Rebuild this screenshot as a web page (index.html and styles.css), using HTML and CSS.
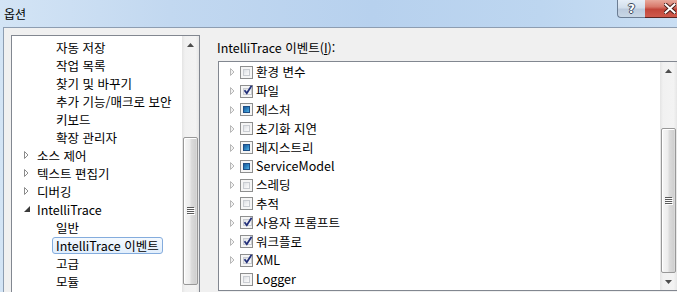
FILE: index.html
```html
<!DOCTYPE html>
<html lang="ko">
<head>
<meta charset="utf-8">
<title>옵션</title>
<link rel="stylesheet" href="styles.css">
</head>
<body>
<div class="window">
  <div class="titlebar">
    <span class="title">옵션</span>
    <div class="caption-buttons">
      <div class="cap-btn help"><span class="help-glyph">?</span></div>
      <div class="cap-btn close">
        <svg width="12" height="11" viewBox="0 0 12 11"><path d="M1.5 1.5 L10.5 9.5 M10.5 1.5 L1.5 9.5" stroke="#4a1d19" stroke-width="4" stroke-linecap="square"/><path d="M1.5 1.5 L10.5 9.5 M10.5 1.5 L1.5 9.5" stroke="#ffffff" stroke-width="2" stroke-linecap="square"/></svg>
      </div>
    </div>
  </div>
  <div class="client">
    <div class="tree-panel">
      <ul class="tree">
        <li class="node l2"><span class="lbl">자동 저장</span></li>
        <li class="node l2"><span class="lbl">작업 목록</span></li>
        <li class="node l2"><span class="lbl">찾기 및 바꾸기</span></li>
        <li class="node l2"><span class="lbl">추가 기능/매크로 보안</span></li>
        <li class="node l2"><span class="lbl">키보드</span></li>
        <li class="node l2"><span class="lbl">확장 관리자</span></li>
        <li class="node l1"><span class="exp"><svg width="5" height="8" viewBox="0 0 5 8"><path d="M0.5 0.5 L4 4 L0.5 7.5 Z" fill="#fff" stroke="#8c8c8c"/></svg></span><span class="lbl">소스 제어</span></li>
        <li class="node l1"><span class="exp"><svg width="5" height="8" viewBox="0 0 5 8"><path d="M0.5 0.5 L4 4 L0.5 7.5 Z" fill="#fff" stroke="#8c8c8c"/></svg></span><span class="lbl">텍스트 편집기</span></li>
        <li class="node l1"><span class="exp"><svg width="5" height="8" viewBox="0 0 5 8"><path d="M0.5 0.5 L4 4 L0.5 7.5 Z" fill="#fff" stroke="#8c8c8c"/></svg></span><span class="lbl">디버깅</span></li>
        <li class="node l1"><span class="exp"><svg width="6" height="6" viewBox="0 0 6 6"><path d="M6 0 L6 6 L0 6 Z" fill="#3a3a3a"/></svg></span><span class="lbl">IntelliTrace</span></li>
        <li class="node l2"><span class="lbl">일반</span></li>
        <li class="node l2"><span class="lbl sel">IntelliTrace 이벤트</span></li>
        <li class="node l2"><span class="lbl">고급</span></li>
        <li class="node l2"><span class="lbl">모듈</span></li>
      </ul>
      <div class="vscroll tree-sb">
        <div class="sb-btn"><svg width="7" height="4" viewBox="0 0 7 4"><path d="M0 4 L3.5 0 L7 4 Z" fill="#4d4d4d"/></svg></div>
        <div class="sb-gap tree-gap"></div>
        <div class="thumb tree-thumb">
          <svg width="8" height="8" viewBox="0 0 8 8"><g fill="#5a5a5a"><rect x="0" y="0" width="7" height="1"/><rect x="0" y="2" width="7" height="1"/><rect x="0" y="4" width="7" height="1"/><rect x="0" y="6" width="7" height="1"/></g><g fill="#ffffff"><rect x="1" y="1" width="7" height="1"/><rect x="1" y="3" width="7" height="1"/><rect x="1" y="5" width="7" height="1"/><rect x="1" y="7" width="7" height="1"/></g></svg>
        </div>
        <div class="sb-gap"></div>
      </div>
    </div>
    <div class="right">
      <div class="field-label">IntelliTrace 이벤트(<span class="acc">I</span>):</div>
      <div class="listbox">
        <ul class="events">
          <li class="ev"><span class="exp2"><svg width="5" height="8" viewBox="0 0 5 8"><path d="M0.5 0.5 L4 4 L0.5 7.5 Z" fill="#f2f2f2" stroke="#b8b8b8"/></svg></span><span class="cb"><span class="cb-in"></span></span><span class="ev-txt">환경 변수</span></li>
          <li class="ev"><span class="exp2"><svg width="5" height="8" viewBox="0 0 5 8"><path d="M0.5 0.5 L4 4 L0.5 7.5 Z" fill="#f2f2f2" stroke="#b8b8b8"/></svg></span><span class="cb"><span class="cb-in"><svg class="chk" width="10" height="10" viewBox="0 0 10 10"><path d="M1.5 5.2 L3.8 8.2 L8.6 0.8" fill="none" stroke="#23307a" stroke-width="1.8"/></svg></span></span><span class="ev-txt">파일</span></li>
          <li class="ev"><span class="exp2"><svg width="5" height="8" viewBox="0 0 5 8"><path d="M0.5 0.5 L4 4 L0.5 7.5 Z" fill="#f2f2f2" stroke="#b8b8b8"/></svg></span><span class="cb mixed"><span class="cb-in"></span></span><span class="ev-txt">제스처</span></li>
          <li class="ev"><span class="exp2"><svg width="5" height="8" viewBox="0 0 5 8"><path d="M0.5 0.5 L4 4 L0.5 7.5 Z" fill="#f2f2f2" stroke="#b8b8b8"/></svg></span><span class="cb"><span class="cb-in"></span></span><span class="ev-txt">초기화 지연</span></li>
          <li class="ev"><span class="exp2"><svg width="5" height="8" viewBox="0 0 5 8"><path d="M0.5 0.5 L4 4 L0.5 7.5 Z" fill="#f2f2f2" stroke="#b8b8b8"/></svg></span><span class="cb mixed"><span class="cb-in"></span></span><span class="ev-txt">레지스트리</span></li>
          <li class="ev"><span class="exp2"><svg width="5" height="8" viewBox="0 0 5 8"><path d="M0.5 0.5 L4 4 L0.5 7.5 Z" fill="#f2f2f2" stroke="#b8b8b8"/></svg></span><span class="cb mixed"><span class="cb-in"></span></span><span class="ev-txt">ServiceModel</span></li>
          <li class="ev"><span class="exp2"><svg width="5" height="8" viewBox="0 0 5 8"><path d="M0.5 0.5 L4 4 L0.5 7.5 Z" fill="#f2f2f2" stroke="#b8b8b8"/></svg></span><span class="cb"><span class="cb-in"></span></span><span class="ev-txt">스레딩</span></li>
          <li class="ev"><span class="exp2"><svg width="5" height="8" viewBox="0 0 5 8"><path d="M0.5 0.5 L4 4 L0.5 7.5 Z" fill="#f2f2f2" stroke="#b8b8b8"/></svg></span><span class="cb"><span class="cb-in"></span></span><span class="ev-txt">추적</span></li>
          <li class="ev"><span class="exp2"><svg width="5" height="8" viewBox="0 0 5 8"><path d="M0.5 0.5 L4 4 L0.5 7.5 Z" fill="#f2f2f2" stroke="#b8b8b8"/></svg></span><span class="cb"><span class="cb-in"><svg class="chk" width="10" height="10" viewBox="0 0 10 10"><path d="M1.5 5.2 L3.8 8.2 L8.6 0.8" fill="none" stroke="#23307a" stroke-width="1.8"/></svg></span></span><span class="ev-txt">사용자 프롬프트</span></li>
          <li class="ev"><span class="exp2"><svg width="5" height="8" viewBox="0 0 5 8"><path d="M0.5 0.5 L4 4 L0.5 7.5 Z" fill="#f2f2f2" stroke="#b8b8b8"/></svg></span><span class="cb"><span class="cb-in"><svg class="chk" width="10" height="10" viewBox="0 0 10 10"><path d="M1.5 5.2 L3.8 8.2 L8.6 0.8" fill="none" stroke="#23307a" stroke-width="1.8"/></svg></span></span><span class="ev-txt">워크플로</span></li>
          <li class="ev"><span class="exp2"><svg width="5" height="8" viewBox="0 0 5 8"><path d="M0.5 0.5 L4 4 L0.5 7.5 Z" fill="#f2f2f2" stroke="#b8b8b8"/></svg></span><span class="cb"><span class="cb-in"><svg class="chk" width="10" height="10" viewBox="0 0 10 10"><path d="M1.5 5.2 L3.8 8.2 L8.6 0.8" fill="none" stroke="#23307a" stroke-width="1.8"/></svg></span></span><span class="ev-txt">XML</span></li>
          <li class="ev"><span class="exp2"></span><span class="cb"><span class="cb-in"></span></span><span class="ev-txt">Logger</span></li>
        </ul>
        <div class="vscroll list-sb">
          <div class="sb-btn"><svg width="7" height="4" viewBox="0 0 7 4"><path d="M0 4 L3.5 0 L7 4 Z" fill="#4d4d4d"/></svg></div>
          <div class="sb-gap list-gap"></div>
          <div class="thumb list-thumb">
            <svg width="8" height="8" viewBox="0 0 8 8"><g fill="#5a5a5a"><rect x="0" y="0" width="7" height="1"/><rect x="0" y="2" width="7" height="1"/><rect x="0" y="4" width="7" height="1"/><rect x="0" y="6" width="7" height="1"/></g><g fill="#ffffff"><rect x="1" y="1" width="7" height="1"/><rect x="1" y="3" width="7" height="1"/><rect x="1" y="5" width="7" height="1"/><rect x="1" y="7" width="7" height="1"/></g></svg>
          </div>
          <div class="sb-btn"><svg width="7" height="4" viewBox="0 0 7 4"><path d="M0 0 L3.5 4 L7 0 Z" fill="#4d4d4d"/></svg></div>
        </div>
      </div>
    </div>
  </div>
</div>
</body>
</html>
```

FILE: styles.css
```css
* { box-sizing: border-box; }

html, body {
  margin: 0;
  padding: 0;
}

body {
  width: 677px;
  height: 292px;
  overflow: hidden;
  font-family: "Noto Sans CJK KR", "Noto Sans", sans-serif;
  font-size: 12.5px;
  color: #000;
}

.window {
  width: 677px;
  height: 292px;
  display: flex;
  flex-direction: column;
  background: linear-gradient(to right, #d3e4f5 0%, #c2d8f0 25%, #b7d1ee 55%, #bdd6f0 80%, #c9def3 100%);
}

.titlebar {
  height: 27px;
  flex: none;
  display: flex;
  align-items: flex-start;
}

.title {
  margin: 6px 0 0 4px;
  font-size: 12px;
  line-height: 15px;
  color: #000;
}

.caption-buttons {
  margin-left: auto;
  display: flex;
}

.cap-btn {
  height: 18px;
  display: flex;
  align-items: center;
  justify-content: center;
}

.help {
  width: 28px;
  border: 1px solid #6b7d93;
  border-top: none;
  border-right: none;
  border-radius: 0 0 0 4px;
  background: linear-gradient(to bottom, #e6eef7 0%, #d3dfec 45%, #bccbdd 55%, #c9d7e6 100%);
}

.help-glyph {
  font-family: "DejaVu Sans", sans-serif;
  font-weight: bold;
  font-size: 12px;
  line-height: 12px;
  color: #fff;
  text-shadow: 1px 0 0 #3b4a5e, -1px 0 0 #3b4a5e, 0 1px 0 #3b4a5e, 0 -1px 0 #3b4a5e;
}

.close {
  width: 32px;
  justify-content: flex-end;
  padding-right: 1px;
  border-bottom: 1px solid #5a2420;
  background: linear-gradient(to bottom, #e8a89b 0%, #d8786a 40%, #c2463a 55%, #cf5a4c 100%);
}

.client {
  flex: 1;
  margin-left: 3px;
  border-left: 1px solid #8d9db1;
  border-top: 1px solid #8d9db1;
  background: #f0f0f0;
  display: flex;
  align-items: flex-start;
  min-height: 0;
  overflow: hidden;
}

/* ---------- left tree ---------- */

.tree-panel {
  margin: 7px 0 0 7px;
  width: 189px;
  height: 258px;
  flex: none;
  border: 1px solid #828790;
  border-bottom: none;
  background: #fff;
  display: flex;
}

.tree {
  list-style: none;
  margin: 0;
  padding: 2px 0 0 0;
  flex: 1;
  min-width: 0;
}

.node {
  height: 18px;
  display: flex;
  align-items: center;
  white-space: nowrap;
  line-height: 16px;
}

.node.l1 {
  padding-left: 7px;
}

.node.l2 {
  padding-left: 40px;
}

.exp {
  width: 15px;
  height: 16px;
  display: flex;
  align-items: center;
  justify-content: center;
  margin-right: 3px;
}

.lbl {
  display: inline-block;
  border: 1px solid transparent;
  padding: 0 3px;
  line-height: 15px;
}

.node.l1 .lbl {
  padding-left: 0;
  margin-left: -1px;
}

.lbl.sel {
  border-color: #84acdd;
  border-radius: 3px;
  background: linear-gradient(to bottom, #f4f9fe 0%, #e1eefc 100%);
}

/* ---------- scrollbars ---------- */

.vscroll {
  width: 17px;
  flex: none;
  display: flex;
  flex-direction: column;
  background: linear-gradient(to right, #e4e4e4 0%, #f1f1f1 18%, #f3f3f3 80%, #e6e6e6 100%);
}

.sb-btn {
  height: 17px;
  flex: none;
  display: flex;
  align-items: center;
  justify-content: center;
}

.sb-gap {
  flex: 1;
}

.tree-gap {
  flex: none;
  height: 84px;
}

.list-gap {
  flex: none;
  height: 49px;
}

.thumb {
  flex: none;
  margin: 0 1px;
  border: 1px solid #989898;
  border-radius: 2px;
  display: flex;
  align-items: center;
  justify-content: center;
  background: linear-gradient(to right, #f7f7f7 0%, #ececec 45%, #dcdcdc 55%, #cfcfcf 92%, #e2e2e2 100%);
  box-shadow: inset 1px 1px 0 #ffffff;
}

.tree-thumb {
  height: 148px;
}

.list-thumb {
  height: 145px;
}

/* ---------- right column ---------- */

.right {
  margin: 12px 0 0 18px;
  display: flex;
  flex-direction: column;
}

.field-label {
  height: 16px;
  line-height: 16px;
  margin-left: -1px;
  white-space: nowrap;
}

.acc {
  text-decoration: underline;
  text-underline-offset: 1px;
}

.listbox {
  margin-top: 5px;
  width: 460px;
  height: 230px;
  border: 1px solid #828790;
  background: #fff;
  display: flex;
}

.events {
  list-style: none;
  margin: 0;
  padding: 1px 0 0 0;
  flex: 1;
  min-width: 0;
}

.ev {
  height: 18.8px;
  display: flex;
  align-items: center;
  padding-left: 9px;
  white-space: nowrap;
}

.exp2 {
  width: 9px;
  height: 9px;
  margin-right: 3px;
  display: flex;
  align-items: center;
  justify-content: center;
  flex: none;
}

.cb {
  width: 13px;
  height: 13px;
  flex: none;
  border: 1px solid #8e8f8f;
  background: #f5f5f5;
  padding: 2px;
  display: flex;
}

.cb-in {
  flex: 1;
  border: 1px solid #c9ccd1;
  background: linear-gradient(135deg, #dcdfe3 0%, #eeeff1 50%, #fbfbfb 100%);
  display: flex;
  align-items: center;
  justify-content: center;
  overflow: visible;
}

.chk {
  flex: none;
  margin: -3px -2px -1px -1px;
}

.cb.mixed .cb-in {
  border-color: #1e4f86;
  background: linear-gradient(135deg, #1c5a9a 0%, #2f86c4 55%, #56b4e4 100%);
}

.ev-txt {
  margin-left: 3px;
  line-height: 16px;
}
```
